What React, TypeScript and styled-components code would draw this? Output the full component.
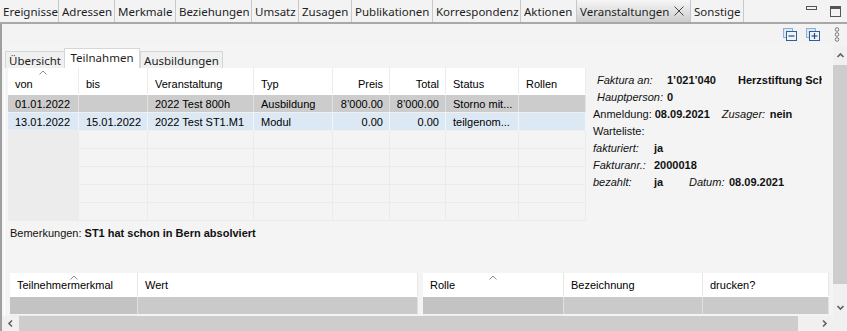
import React from "react";
import styled, { createGlobalStyle } from "styled-components";

const GlobalStyle = createGlobalStyle`
  html, body {
    margin: 0;
    padding: 0;
    background: #f3f3f3;
    overflow: hidden;
  }
  body {
    font-family: "Liberation Sans", Arial, sans-serif;
    font-size: 11px;
    color: #000;
  }
`;

const Window = styled.div`
  width: 847px;
  height: 331px;
  display: flex;
  flex-direction: column;
  overflow: hidden;
  background: #f3f3f3;
`;

/* ---------- top tab bar ---------- */

const TabBar = styled.div`
  height: 22px;
  display: flex;
  border-bottom: 2px solid #a8a8a8;
  background: #f3f3f3;
`;

const Tab = styled.div<{ $w: number; $active?: boolean }>`
  width: ${(p) => p.$w}px;
  flex: none;
  box-sizing: border-box;
  height: 22px;
  padding-left: 3px;
  border-right: 1px solid #c8c8c8;
  display: flex;
  align-items: center;
  font-family: "Noto Sans", "Open Sans", sans-serif;
  font-size: 11.5px;
  color: #1e1e1e;
  white-space: nowrap;
  overflow: hidden;
  background: ${(p) =>
    p.$active ? "linear-gradient(#f6f6f6, #cdcdcd)" : "#f3f3f3"};
`;

const TabClose = styled.span`
  margin-left: auto;
  margin-right: 6px;
  display: flex;
`;

const WindowButtons = styled.div`
  margin-left: auto;
  display: flex;
  align-items: flex-start;
  padding-top: 6px;
  padding-right: 6px;
  gap: 13px;
`;

/* ---------- panel ---------- */

const Panel = styled.div`
  flex: 1;
  min-height: 0;
  display: flex;
  flex-direction: column;
  border-left: 2px solid #9f9f9f;
`;

const Toolbar = styled.div`
  height: 21px;
  flex: none;
  display: flex;
  align-items: center;
  justify-content: flex-end;
  padding-right: 7px;
`;

const ToolButton = styled.span<{ $ml?: number }>`
  display: flex;
  margin-left: ${(p) => p.$ml ?? 0}px;
`;

const ScrollArea = styled.div`
  flex: 1;
  min-height: 0;
  display: grid;
  grid-template-columns: 1fr 14px;
  grid-template-rows: 1fr 15px;
`;

const Viewport = styled.div`
  overflow: hidden;
  background: #f4f4f4;
  display: flex;
  flex-direction: column;
`;

/* ---------- sub tabs ---------- */

const SubTabStrip = styled.div`
  height: 20px;
  margin-top: 3px;
  padding-left: 3px;
  display: flex;
  align-items: flex-end;
  flex: none;
`;

const SubTab = styled.div<{ $w: number; $active?: boolean }>`
  width: ${(p) => p.$w}px;
  height: ${(p) => (p.$active ? 20 : 17)}px;
  box-sizing: border-box;
  border: 1px solid #d6d6d6;
  border-bottom: none;
  margin-left: ${(p) => (p.$active ? -1 : 0)}px;
  background: ${(p) => (p.$active ? "#ffffff" : "#f0f0f0")};
  display: flex;
  align-items: center;
  justify-content: center;
  font-family: "Noto Sans", "Open Sans", sans-serif;
  font-size: 11.5px;
  color: #1e1e1e;
  white-space: nowrap;
  padding-bottom: ${(p) => (p.$active ? 2 : 0)}px;
`;

const Pane = styled.div`
  margin-left: 2px;
  border-left: 1px solid #ffffff;
  padding-left: 3px;
  display: flex;
  flex-direction: column;
  flex: none;
`;

const TopRow = styled.div`
  display: flex;
  height: 154px;
`;

/* ---------- grids ---------- */

const Grid = styled.div<{ $w: number }>`
  width: ${(p) => p.$w}px;
  flex: none;
  display: flex;
  flex-direction: column;
  overflow: hidden;
`;

const GridRow = styled.div<{ $cols: string; $h: number; $bg: string; $line?: string }>`
  display: grid;
  grid-template-columns: ${(p) => p.$cols};
  height: ${(p) => p.$h}px;
  flex: none;
  background: ${(p) => p.$bg};
  box-sizing: border-box;
  border-bottom: 1px solid ${(p) => p.$line ?? "transparent"};
`;

const Cell = styled.div<{ $right?: boolean; $bg?: string; $sep?: string; $pt?: number }>`
  position: relative;
  box-sizing: border-box;
  padding: ${(p) => p.$pt ?? 0}px 6px 0 7px;
  display: flex;
  align-items: center;
  justify-content: ${(p) => (p.$right ? "flex-end" : "flex-start")};
  border-right: 1px solid ${(p) => p.$sep ?? "#e6e6e6"};
  background: ${(p) => p.$bg ?? "transparent"};
  white-space: nowrap;
  overflow: hidden;
`;

const SortCaret = styled.span`
  position: absolute;
  top: 2px;
  left: 50%;
  margin-left: -4px;
  display: flex;
`;

/* ---------- info panel ---------- */

const InfoPanel = styled.div`
  width: 236px;
  flex: none;
  padding-top: 3px;
  overflow: hidden;
`;

const InfoRow = styled.div<{ $indent: number }>`
  height: 17px;
  display: flex;
  align-items: center;
  padding-left: ${(p) => p.$indent}px;
  white-space: nowrap;
`;

const InfoText = styled.span<{ $w?: number; $italic?: boolean; $bold?: boolean }>`
  flex: none;
  box-sizing: border-box;
  min-width: ${(p) => (p.$w ? `${p.$w}px` : "0")};
  padding-right: ${(p) => (p.$w ? 3 : 0)}px;
  font-style: ${(p) => (p.$italic ? "italic" : "normal")};
  font-weight: ${(p) => (p.$bold ? "bold" : "normal")};
  color: #111;
`;

const Remarks = styled.div`
  height: 15px;
  margin-top: 3px;
  margin-left: 2px;
  display: flex;
  align-items: center;
`;

const LowerRow = styled.div`
  display: flex;
  gap: 5px;
  margin-top: 33px;
  margin-left: 2px;
`;

/* ---------- scrollbars ---------- */

const VScroll = styled.div`
  background: #f0f0f0;
  display: flex;
  flex-direction: column;
`;

const HScroll = styled.div`
  background: #f0f0f0;
  display: flex;
`;

const Corner = styled.div`
  background: #f0f0f0;
`;

const ArrowBox = styled.div<{ $w?: number; $h?: number }>`
  width: ${(p) => (p.$w ? `${p.$w}px` : "auto")};
  height: ${(p) => (p.$h ? `${p.$h}px` : "auto")};
  flex: none;
  display: flex;
  align-items: center;
  justify-content: center;
`;

const Thumb = styled.div<{ $w?: number; $h?: number }>`
  flex: none;
  width: ${(p) => (p.$w ? `${p.$w}px` : "auto")};
  height: ${(p) => (p.$h ? `${p.$h}px` : "auto")};
  background: #cdcdcd;
`;

const Track = styled.div`
  flex: 1;
`;

/* ---------- icons ---------- */

const Chevron = ({ dir }: { dir: "up" | "down" | "left" | "right" }) => {
  const rot = { up: 0, right: 90, down: 180, left: 270 }[dir];
  return (
    <svg width="9" height="9" viewBox="0 0 9 9">
      <path
        d="M1.5 6 L4.5 3 L7.5 6"
        fill="none"
        stroke="#606060"
        strokeWidth="1.6"
        transform={`rotate(${rot} 4.5 4.5)`}
      />
    </svg>
  );
};

const Caret = () => (
  <svg width="8" height="5" viewBox="0 0 8 5">
    <path d="M0.5 4.5 L4 1 L7.5 4.5" fill="none" stroke="#8c8c8c" strokeWidth="1" />
  </svg>
);

const TreeIcon = ({ plus }: { plus?: boolean }) => (
  <svg width="14" height="13" viewBox="0 0 14 13">
    <rect x="0.5" y="0.5" width="9" height="9" fill="#dce8f4" stroke="#8fb0d2" />
    <rect x="3.5" y="3.5" width="10" height="9" fill="#eef4fa" stroke="#2f5f95" />
    <path d="M5.5 8 H11.5" stroke="#1f4f85" strokeWidth="1.2" />
    {plus && <path d="M8.5 5 V11" stroke="#1f4f85" strokeWidth="1.2" />}
  </svg>
);

const DotsIcon = () => (
  <svg width="6" height="15" viewBox="0 0 6 15">
    <circle cx="3" cy="2.5" r="1.8" fill="none" stroke="#7a7a7a" />
    <circle cx="3" cy="7.5" r="1.8" fill="none" stroke="#7a7a7a" />
    <circle cx="3" cy="12.5" r="1.8" fill="none" stroke="#7a7a7a" />
  </svg>
);

const CloseIcon = () => (
  <svg width="10" height="10" viewBox="0 0 10 10">
    <path d="M0.5 0.5 L9.5 9.5 M9.5 0.5 L0.5 9.5" stroke="#444" strokeWidth="1" />
  </svg>
);

const MinimizeIcon = () => (
  <svg width="11" height="5" viewBox="0 0 11 5">
    <rect x="0.5" y="0.5" width="10" height="3" fill="none" stroke="#555" />
  </svg>
);

const MaximizeIcon = () => (
  <svg width="11" height="11" viewBox="0 0 11 11">
    <rect x="0.5" y="0.5" width="10" height="10" fill="none" stroke="#555" />
    <path d="M0.5 2 H10.5" stroke="#555" strokeWidth="2" />
  </svg>
);

/* ---------- data ---------- */

const tabs = [
  { t: "Ereignisse", w: 59 },
  { t: "Adressen", w: 56 },
  { t: "Merkmale", w: 61 },
  { t: "Beziehungen", w: 76 },
  { t: "Umsatz", w: 47 },
  { t: "Zusagen", w: 53 },
  { t: "Publikationen", w: 81 },
  { t: "Korrespondenz", w: 88 },
  { t: "Aktionen", w: 56 },
  { t: "Veranstaltungen", w: 114, active: true },
  { t: "Sonstige", w: 53 },
];

const topCols = "71px 69px 106px 79px 57px 56px 73px 67px";
const topHeader = ["von", "bis", "Veranstaltung", "Typ", "Preis", "Total", "Status", "Rollen"];
const rightAligned = [4, 5];

const topRows = [
  {
    bg: "#cccccc",
    sep: "#e2e2e2",
    cells: ["01.01.2022", "", "2022 Test 800h", "Ausbildung", "8’000.00", "8’000.00", "Storno mit...", ""],
  },
  {
    bg: "#dce8f4",
    sep: "#f2f6fa",
    cells: ["13.01.2022", "15.01.2022", "2022 Test ST1.M1", "Modul", "0.00", "0.00", "teilgenom...", ""],
  },
];

type InfoItem = { t: string; w?: number; i?: boolean; b?: boolean };

const info: { indent: number; items: InfoItem[] }[] = [
  {
    indent: 11,
    items: [
      { t: "Faktura an:", w: 70, i: true },
      { t: "1’021’040", w: 71, b: true },
      { t: "Herzstiftung Schweiz", b: true },
    ],
  },
  {
    indent: 11,
    items: [
      { t: "Hauptperson:", w: 70, i: true },
      { t: "0", b: true },
    ],
  },
  {
    indent: 7,
    items: [
      { t: "Anmeldung:", w: 60 },
      { t: "08.09.2021", w: 67, b: true },
      { t: "Zusager:", w: 48, i: true },
      { t: "nein", b: true },
    ],
  },
  { indent: 7, items: [{ t: "Warteliste:" }] },
  {
    indent: 7,
    items: [
      { t: "fakturiert:", w: 61, i: true },
      { t: "ja", b: true },
    ],
  },
  {
    indent: 7,
    items: [
      { t: "Fakturanr.:", w: 61, i: true },
      { t: "2000018", b: true },
    ],
  },
  {
    indent: 7,
    items: [
      { t: "bezahlt:", w: 61, i: true },
      { t: "ja", w: 35, b: true },
      { t: "Datum:", w: 40, i: true },
      { t: "08.09.2021", b: true },
    ],
  },
];

const App = () => {
  return (
    <Window>
      <GlobalStyle />
      <TabBar>
        {tabs.map((tab) => (
          <Tab key={tab.t} $w={tab.w} $active={tab.active}>
            {tab.t}
            {tab.active && (
              <TabClose>
                <CloseIcon />
              </TabClose>
            )}
          </Tab>
        ))}
        <WindowButtons>
          <MinimizeIcon />
          <MaximizeIcon />
        </WindowButtons>
      </TabBar>

      <Panel>
        <Toolbar>
          <ToolButton>
            <TreeIcon />
          </ToolButton>
          <ToolButton $ml={9}>
            <TreeIcon plus />
          </ToolButton>
          <ToolButton $ml={14}>
            <DotsIcon />
          </ToolButton>
        </Toolbar>

        <ScrollArea>
          <Viewport>
            <SubTabStrip>
              <SubTab $w={60}>Übersicht</SubTab>
              <SubTab $w={76} $active>
                Teilnahmen
              </SubTab>
              <SubTab $w={83}>Ausbildungen</SubTab>
            </SubTabStrip>

            <Pane>
              <TopRow>
                <Grid $w={578}>
                  <GridRow $cols={topCols} $h={27} $bg="#ffffff">
                    {topHeader.map((h, i) => (
                      <Cell key={h} $right={rightAligned.includes(i)} $pt={5} $sep="#ececec">
                        {i === 0 && (
                          <SortCaret>
                            <Caret />
                          </SortCaret>
                        )}
                        {h}
                      </Cell>
                    ))}
                  </GridRow>
                  {topRows.map((row, r) => (
                    <GridRow key={r} $cols={topCols} $h={18} $bg={row.bg} $line="#f0f0f0">
                      {row.cells.map((c, i) => (
                        <Cell key={i} $right={rightAligned.includes(i)} $sep={row.sep}>
                          {c}
                        </Cell>
                      ))}
                    </GridRow>
                  ))}
                  {[0, 1, 2, 3, 4].map((r) => (
                    <GridRow key={`e${r}`} $cols={topCols} $h={18} $bg="#f4f4f4" $line="#ebebeb">
                      {topHeader.map((h, i) => (
                        <Cell key={h} $bg={i === 0 ? "#ececec" : undefined} $sep="#ebebeb" />
                      ))}
                    </GridRow>
                  ))}
                </Grid>

                <InfoPanel>
                  {info.map((row, r) => (
                    <InfoRow key={r} $indent={row.indent}>
                      {row.items.map((it, i) => (
                        <InfoText key={i} $w={it.w} $italic={it.i} $bold={it.b}>
                          {it.t}
                        </InfoText>
                      ))}
                    </InfoRow>
                  ))}
                </InfoPanel>
              </TopRow>

              <Remarks>
                <InfoText $w={74}>Bemerkungen:</InfoText>
                <InfoText $bold>ST1 hat schon in Bern absolviert</InfoText>
              </Remarks>

              <LowerRow>
                <Grid $w={408}>
                  <GridRow $cols="128px 280px" $h={24} $bg="#ffffff">
                    <Cell $sep="#e6e6e6">
                      <SortCaret>
                        <Caret />
                      </SortCaret>
                      Teilnehmermerkmal
                    </Cell>
                    <Cell $sep="#e6e6e6">Wert</Cell>
                  </GridRow>
                  <GridRow $cols="128px 280px" $h={18} $bg="#cacaca" $line="#f4f4f4">
                    <Cell $bg="#c3c3c3" $sep="#e0e0e0" />
                    <Cell $sep="#e0e0e0" />
                  </GridRow>
                  <GridRow $cols="128px 280px" $h={18} $bg="#f4f4f4">
                    <Cell $bg="#ececec" $sep="#ebebeb" />
                    <Cell $sep="#ebebeb" />
                  </GridRow>
                </Grid>

                <Grid $w={406}>
                  <GridRow $cols="141px 139px 126px" $h={24} $bg="#ffffff">
                    <Cell $sep="#e6e6e6">
                      <SortCaret>
                        <Caret />
                      </SortCaret>
                      Rolle
                    </Cell>
                    <Cell $sep="#e6e6e6">Bezeichnung</Cell>
                    <Cell $sep="#e6e6e6">drucken?</Cell>
                  </GridRow>
                  <GridRow $cols="141px 139px 126px" $h={18} $bg="#cacaca" $line="#f4f4f4">
                    <Cell $bg="#c3c3c3" $sep="#e0e0e0" />
                    <Cell $sep="#e0e0e0" />
                    <Cell $sep="#e0e0e0" />
                  </GridRow>
                  <GridRow $cols="141px 139px 126px" $h={18} $bg="#f4f4f4">
                    <Cell $bg="#ececec" $sep="#ebebeb" />
                    <Cell $sep="#ebebeb" />
                    <Cell $sep="#ebebeb" />
                  </GridRow>
                </Grid>
              </LowerRow>
            </Pane>
          </Viewport>

          <VScroll>
            <ArrowBox $h={20}>
              <Chevron dir="up" />
            </ArrowBox>
            <Thumb $h={219} />
            <Track />
            <ArrowBox $h={17}>
              <Chevron dir="down" />
            </ArrowBox>
          </VScroll>

          <HScroll>
            <ArrowBox $w={17}>
              <Chevron dir="left" />
            </ArrowBox>
            <Thumb $w={779} />
            <Track />
            <ArrowBox $w={17}>
              <Chevron dir="right" />
            </ArrowBox>
          </HScroll>
          <Corner />
        </ScrollArea>
      </Panel>
    </Window>
  );
};

export default App;
